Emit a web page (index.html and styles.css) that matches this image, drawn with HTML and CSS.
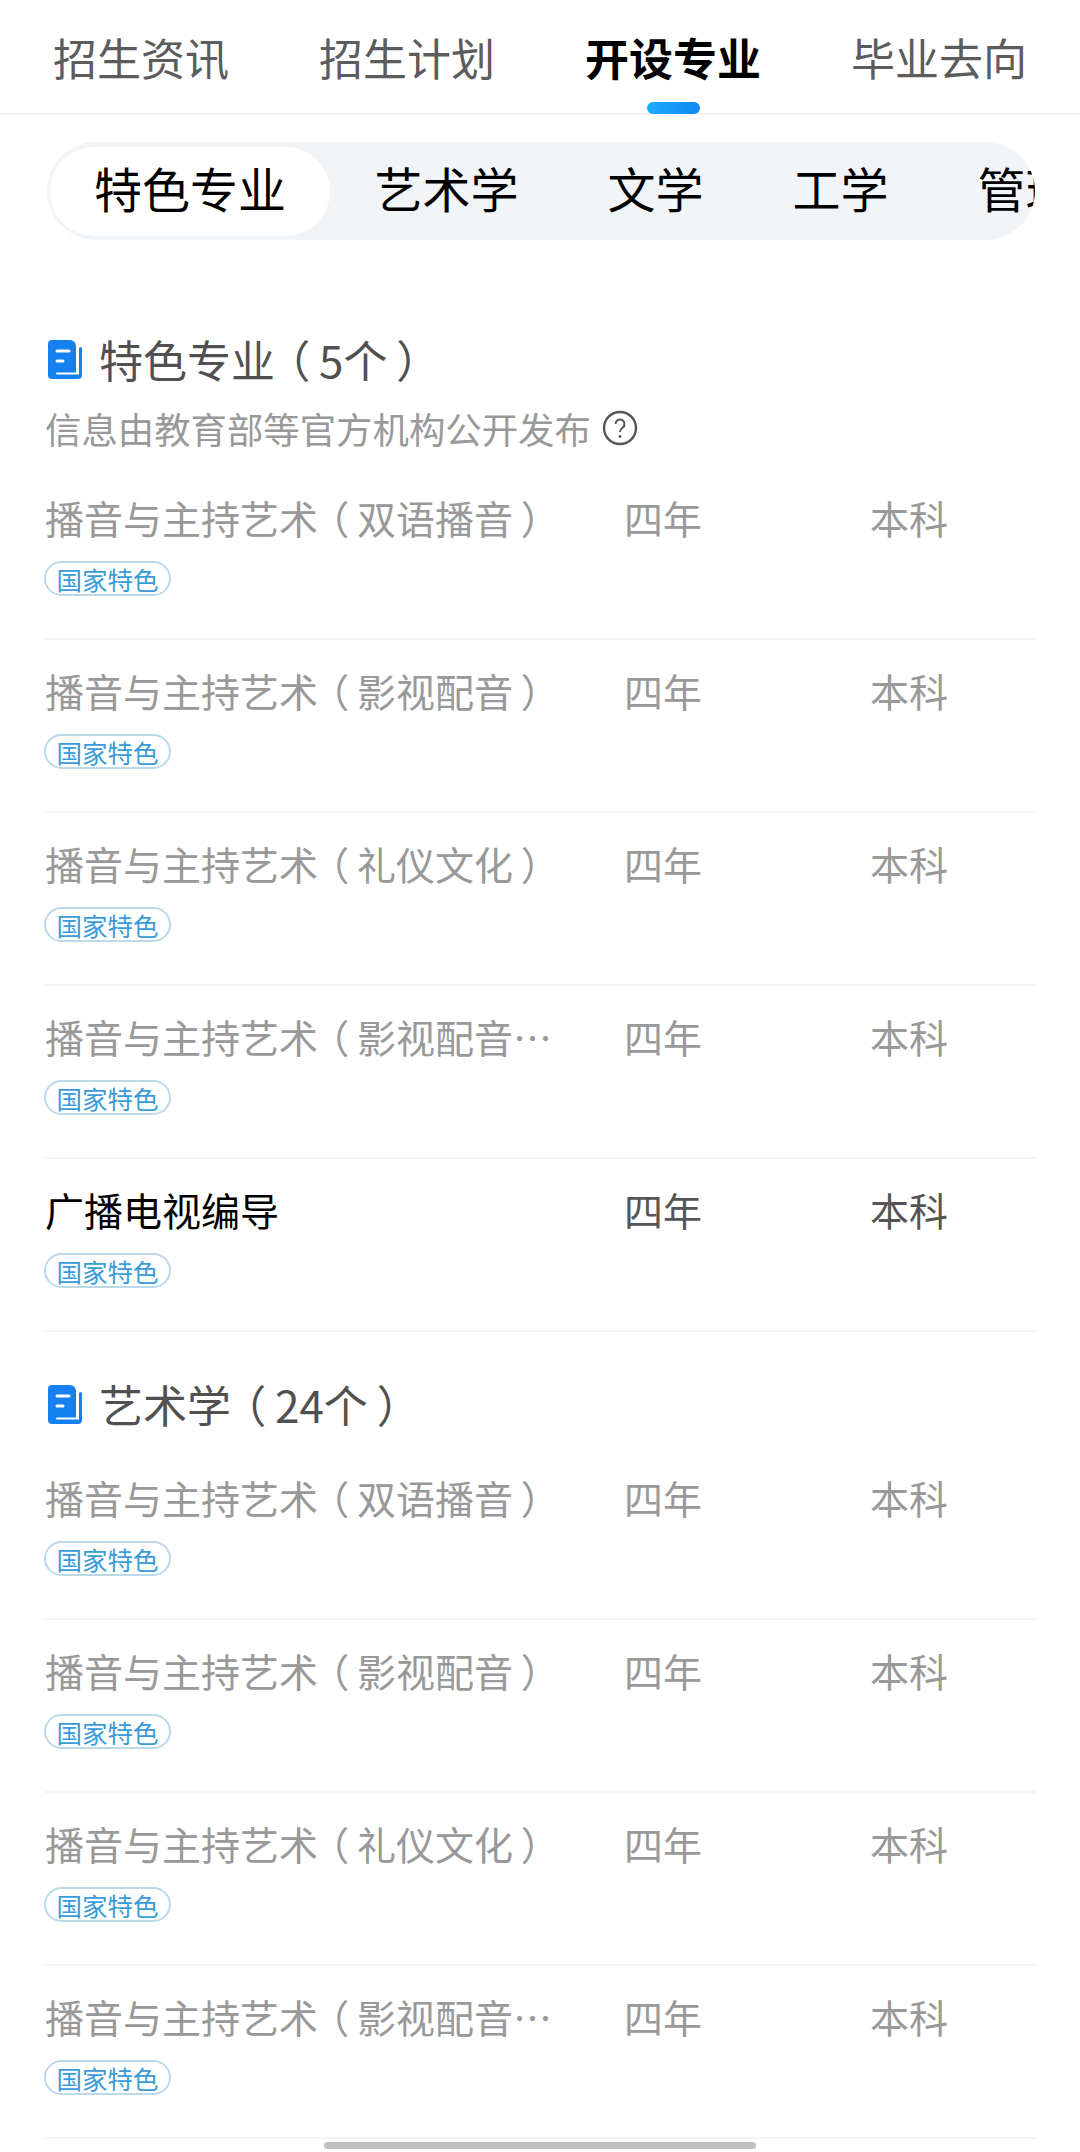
FILE: index.html
```html
<!DOCTYPE html>
<html lang="zh-CN">
<head>
<meta charset="utf-8">
<title>开设专业</title>
<link rel="stylesheet" href="styles.css">
</head>
<body>
<div class="page">
  <nav class="tabs">
    <span class="tab">招生资讯</span>
    <span class="tab">招生计划</span>
    <span class="tab active">开设专业</span>
    <span class="tab">毕业去向</span>
  </nav>
  <div class="seg">
    <span class="seg-item on">特色专业</span>
    <span class="seg-item">艺术学</span>
    <span class="seg-item">文学</span>
    <span class="seg-item">工学</span>
    <span class="seg-item">管理学</span>
  </div>

  <section class="group first">
    <h2 class="group-title">
      <svg class="book" viewBox="0 0 34 39"><path d="M4 0H22a6 6 0 0 1 6 6V32.500H9a1 1 0 0 0 0 2H31V8.500a1.500 1.500 0 0 1 3 0V35a4 4 0 0 1-4 4H4a4 4 0 0 1-4-4V4a4 4 0 0 1 4-4z" fill="#1580f0"/><path d="M9 11h12M9 21h6" stroke="#fff" stroke-width="3" stroke-linecap="round"/></svg>
      <span>特色专业<span class="po">（</span>5个<span class="pc">）</span></span>
    </h2>
    <p class="note">信息由教育部等官方机构公开发布
      <svg class="help" viewBox="0 0 36 36"><circle cx="18" cy="18" r="16" fill="none" stroke="#555" stroke-width="2.400"/><path d="M13.500 14a4.500 4.500 0 1 1 7 3.700c-1.700 1.200-2.500 2-2.500 4.300" fill="none" stroke="#555" stroke-width="2"/><circle cx="18" cy="26.500" r="1.400" fill="#555"/></svg>
    </p>
    <div class="row"><div class="row-main"><span class="name">播音与主持艺术<span class="po">（</span>双语播音<span class="pc">）</span></span><span class="yr">四年</span><span class="deg">本科</span></div><span class="tag">国家特色</span></div>
    <div class="row"><div class="row-main"><span class="name">播音与主持艺术<span class="po">（</span>影视配音<span class="pc">）</span></span><span class="yr">四年</span><span class="deg">本科</span></div><span class="tag">国家特色</span></div>
    <div class="row"><div class="row-main"><span class="name">播音与主持艺术<span class="po">（</span>礼仪文化<span class="pc">）</span></span><span class="yr">四年</span><span class="deg">本科</span></div><span class="tag">国家特色</span></div>
    <div class="row"><div class="row-main"><span class="name">播音与主持艺术<span class="po">（</span>影视配音…</span><span class="yr">四年</span><span class="deg">本科</span></div><span class="tag">国家特色</span></div>
    <div class="row dark"><div class="row-main"><span class="name">广播电视编导</span><span class="yr">四年</span><span class="deg">本科</span></div><span class="tag">国家特色</span></div>
  </section>

  <section class="group second">
    <h2 class="group-title solo">
      <svg class="book" viewBox="0 0 34 39"><path d="M4 0H22a6 6 0 0 1 6 6V32.500H9a1 1 0 0 0 0 2H31V8.500a1.500 1.500 0 0 1 3 0V35a4 4 0 0 1-4 4H4a4 4 0 0 1-4-4V4a4 4 0 0 1 4-4z" fill="#1580f0"/><path d="M9 11h12M9 21h6" stroke="#fff" stroke-width="3" stroke-linecap="round"/></svg>
      <span>艺术学<span class="po">（</span>24个<span class="pc">）</span></span>
    </h2>
    <div class="row"><div class="row-main"><span class="name">播音与主持艺术<span class="po">（</span>双语播音<span class="pc">）</span></span><span class="yr">四年</span><span class="deg">本科</span></div><span class="tag">国家特色</span></div>
    <div class="row"><div class="row-main"><span class="name">播音与主持艺术<span class="po">（</span>影视配音<span class="pc">）</span></span><span class="yr">四年</span><span class="deg">本科</span></div><span class="tag">国家特色</span></div>
    <div class="row"><div class="row-main"><span class="name">播音与主持艺术<span class="po">（</span>礼仪文化<span class="pc">）</span></span><span class="yr">四年</span><span class="deg">本科</span></div><span class="tag">国家特色</span></div>
    <div class="row"><div class="row-main"><span class="name">播音与主持艺术<span class="po">（</span>影视配音…</span><span class="yr">四年</span><span class="deg">本科</span></div><span class="tag">国家特色</span></div>
  </section>
  <div class="home-bar"></div>
</div>
</body>
</html>
```
FILE: styles.css
```css
* { box-sizing: border-box; }
html, body { margin: 0; padding: 0; background: #fff; }
body { font-family: "Noto Sans CJK SC", "Noto Sans", sans-serif; }
.page { position: relative; width: 1080px; height: 2152px; overflow: hidden; background: #fff; }

.tabs { display: flex; gap: 90px; height: 115px; padding: 29px 0 0 53px; border-bottom: 2px solid #f3f3f3; }
.tab { position: relative; width: 176px; flex: none; font-size: 44px; line-height: 56px; color: #5c5c5c; white-space: nowrap; }
.tab.active { color: #000; font-weight: 700; }
.tab.active::after { content: ""; position: absolute; left: 62px; top: 73px; width: 53px; height: 12px; border-radius: 6px; background: linear-gradient(90deg, #19aefc, #0f86f5); }

.seg { display: flex; align-items: center; margin: 27px 45px 0 47px; height: 98px; padding: 0 3px; border-radius: 49px; background: #f2f5f7; overflow: hidden; }
.seg-item { flex: none; padding: 0 44.500px 8px; font-size: 48px; line-height: 81px; color: #000; white-space: nowrap; }
.seg-item.on { padding: 0 44px 8px; background: #fff; border-radius: 45px; }

.group { padding: 0 44px 0 45px; }
.group.first { margin-top: 89px; }
.group.second { margin-top: 42px; }
.group-title { display: flex; align-items: center; gap: 17px; margin: 0; height: 60px; font-size: 44px; font-weight: 400; line-height: 60px; color: #505050; }
.group-title.solo { margin-bottom: 13px; }
.book { flex: none; width: 34px; height: 39px; margin-left: 3px; }
.note { display: flex; align-items: center; gap: 11px; margin: 14px 0 0; height: 50px; font-size: 36.400px; color: #999; }
.help { width: 36px; height: 36px; }
.note + .row { margin-top: 14px; }

.po, .pc { display: inline-block; font-feature-settings: "halt" 1; }
.po { padding: 0 0.2em 0 0.3em; }
.pc { padding: 0 0.3em 0 0.2em; }

.row { height: 173px; padding-top: 22px; border-bottom: 2px solid #f5f5f5; }
.row-main { display: flex; height: 56px; font-size: 39px; line-height: 56px; color: #999; }
.name { width: 579px; white-space: nowrap; }
.yr { width: 246px; }
.dark .name { color: #000; }
.dark .yr, .dark .deg { color: #555; }
.tag { display: inline-block; margin: 16px 0 0 -1px; height: 35px; padding: 0 10.500px; border: 2px solid #bcd9ea; border-radius: 18px; font-size: 25.500px; line-height: 31px; color: #3a9bd9; }

.home-bar { position: absolute; left: 324px; top: 2142px; width: 432px; height: 7px; border-radius: 4px; background: #bfbfbf; }
```
